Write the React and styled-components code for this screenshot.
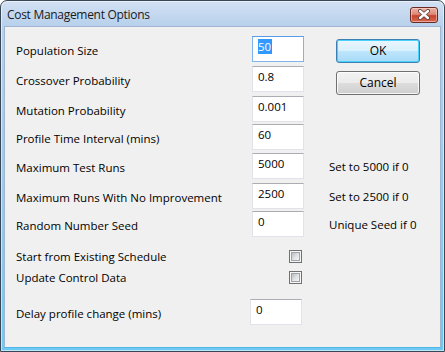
import React from 'react';
import styled, { createGlobalStyle } from 'styled-components';

const GlobalStyle = createGlobalStyle`
	html, body {
		margin: 0;
		padding: 0;
		background: #ffffff;
	}
	body {
		font-family: 'Open Sans', 'Liberation Sans', sans-serif;
		font-size: 11.5px;
		color: #000;
	}
`;

const Window = styled.div`
	width: 445px;
	height: 352px;
	box-sizing: border-box;
	display: flex;
	flex-direction: column;
	border: 1px solid #3a4756;
	border-radius: 7px 7px 0 0;
	background: linear-gradient(to bottom, #d2e1f3 0px, #b9d1ec 24px, #a9cbec 120px, #6ec9f2 100%);
	box-shadow: inset 0 0 0 1px rgba(255, 255, 255, 0.55);
	overflow: hidden;
`;

const TitleBar = styled.div`
	height: 25px;
	display: flex;
	align-items: center;
	justify-content: space-between;
	padding: 0 6px 0 6px;
	flex-shrink: 0;
`;

const Title = styled.span`
	font-size: 12px;
	letter-spacing: -0.3px;
	color: #1a1a1a;
	padding-top: 2px;
`;

const CloseButton = styled.div`
	width: 28px;
	height: 16px;
	margin-top: 2px;
	box-sizing: border-box;
	border: 1px solid #6b2a22;
	border-radius: 3px;
	background: linear-gradient(to bottom, #ebb1a3 0%, #de8a78 45%, #c8432c 55%, #d8684e 100%);
	box-shadow: inset 0 0 0 1px rgba(255, 220, 210, 0.55);
	display: flex;
	align-items: center;
	justify-content: center;
`;

const Client = styled.div`
	flex: 1;
	margin: 0 3px 3px 3px;
	background: #f0f0f0;
	border: 1px solid #9fb6d1;
	border-bottom-color: #4fb7e6;
	padding: 9px 0 0 11px;
	box-sizing: border-box;
`;

const Grid = styled.div`
	display: grid;
	grid-template-columns: 236px 52px 25px 1fr;
	grid-template-rows: 30px 30px 28px 29px 30px 28px 26px;
`;

const Label = styled.div`
	padding-top: ${(p) => p.$offset}px;
	line-height: 14px;
	white-space: nowrap;
`;

const Hint = styled.div`
	grid-column: 4;
	padding-top: 7px;
	line-height: 14px;
	white-space: nowrap;
`;

const TextBox = styled.div`
	width: 52px;
	height: 26px;
	box-sizing: border-box;
	margin-left: ${(p) => p.$shift || 0}px;
	background: #fff;
	border: 1px solid ${(p) => (p.$focused ? '#7eb4ea' : '#e2e3ea')};
	border-top-color: ${(p) => (p.$focused ? '#569de5' : '#abadb3')};
	padding: 3px 5px 0 5px;
	line-height: 14px;
	white-space: nowrap;
`;

const Selected = styled.span`
	background: #3399ff;
	color: #fff;
	border-right: 1px solid #d2691e;
`;

const ButtonColumn = styled.div`
	grid-column: 4;
	grid-row: 1 / span 3;
	display: flex;
	flex-direction: column;
	gap: 8px;
	padding: 3px 0 0 7px;
`;

const Button = styled.div`
	width: 84px;
	height: 24px;
	box-sizing: border-box;
	border: 1px solid ${(p) => (p.$primary ? '#3c7fb1' : '#707070')};
	border-radius: 3px;
	background: ${(p) =>
		p.$primary
			? 'linear-gradient(to bottom, #eaf6fd 0%, #d9f0fc 50%, #bee6fd 51%, #a7d9f5 100%)'
			: 'linear-gradient(to bottom, #f2f2f2 0%, #ebebeb 50%, #dddddd 51%, #cfcfcf 100%)'};
	box-shadow: inset 0 0 0 1px ${(p) => (p.$primary ? '#48d1fc' : 'rgba(255,255,255,0.8)')};
	display: flex;
	align-items: center;
	justify-content: center;
	font-size: 12px;
	line-height: 14px;
`;

const CheckRow = styled.div`
	display: flex;
	align-items: flex-start;
	height: ${(p) => p.$height}px;
	margin-top: ${(p) => p.$top || 0}px;
`;

const CheckLabel = styled.div`
	width: 273px;
	line-height: 14px;
	white-space: nowrap;
`;

const CheckBox = styled.div`
	width: 13px;
	height: 13px;
	box-sizing: border-box;
	border: 1px solid #707070;
	background: #f6f6f6;
	padding: 1px;
	& > div {
		width: 100%;
		height: 100%;
		box-sizing: border-box;
		border: 1px solid #9ea3a9;
		background: linear-gradient(135deg, #b9bdc3 0%, #e2e3e5 55%, #f4f4f4 100%);
	}
`;

const DelayRow = styled.div`
	display: flex;
	align-items: flex-start;
`;

const fields = [
	{ label: 'Population Size', value: '50', focused: true },
	{ label: 'Crossover Probability', value: '0.8' },
	{ label: 'Mutation Probability', value: '0.001' },
	{ label: 'Profile Time Interval (mins)', value: '60' },
	{ label: 'Maximum Test Runs', value: '5000', hint: 'Set to 5000 if 0' },
	{ label: 'Maximum Runs With No Improvement', value: '2500', hint: 'Set to 2500 if 0' },
	{ label: 'Random Number Seed', value: '0', hint: 'Unique Seed if 0' },
];

const CloseIcon = () => (
	<svg width="14" height="11" viewBox="0 0 14 11">
		<path d="M3 2 L11 9 M11 2 L3 9" stroke="#5a3b36" strokeWidth="4" strokeLinecap="round" />
		<path d="M3 2 L11 9 M11 2 L3 9" stroke="#ffffff" strokeWidth="2.4" strokeLinecap="round" />
	</svg>
);

const App = () => {
	return (
		<>
			<GlobalStyle />
			<Window>
				<TitleBar>
					<Title>Cost Management Options</Title>
					<CloseButton>
						<CloseIcon />
					</CloseButton>
				</TitleBar>
				<Client>
					<Grid>
						{fields.map((f, i) => (
							<React.Fragment key={f.label}>
								<Label $offset={8} style={{ gridRow: i + 1, gridColumn: 1 }}>
									{f.label}
								</Label>
								<TextBox $focused={f.focused} style={{ gridRow: i + 1, gridColumn: 2 }}>
									{f.focused ? <Selected>{f.value}</Selected> : f.value}
								</TextBox>
								{f.hint && <Hint style={{ gridRow: i + 1 }}>{f.hint}</Hint>}
							</React.Fragment>
						))}
						<ButtonColumn>
							<Button $primary>OK</Button>
							<Button>Cancel</Button>
						</ButtonColumn>
					</Grid>
					<CheckRow $top={13} $height={21}>
						<CheckLabel>Start from Existing Schedule</CheckLabel>
						<CheckBox>
							<div />
						</CheckBox>
					</CheckRow>
					<CheckRow $height={28}>
						<CheckLabel>Update Control Data</CheckLabel>
						<CheckBox>
							<div />
						</CheckBox>
					</CheckRow>
					<DelayRow>
						<Label $offset={8} style={{ width: 236 }}>
							Delay profile change (mins)
						</Label>
						<TextBox $shift={-2}>0</TextBox>
					</DelayRow>
				</Client>
			</Window>
		</>
	);
};

export default App;
